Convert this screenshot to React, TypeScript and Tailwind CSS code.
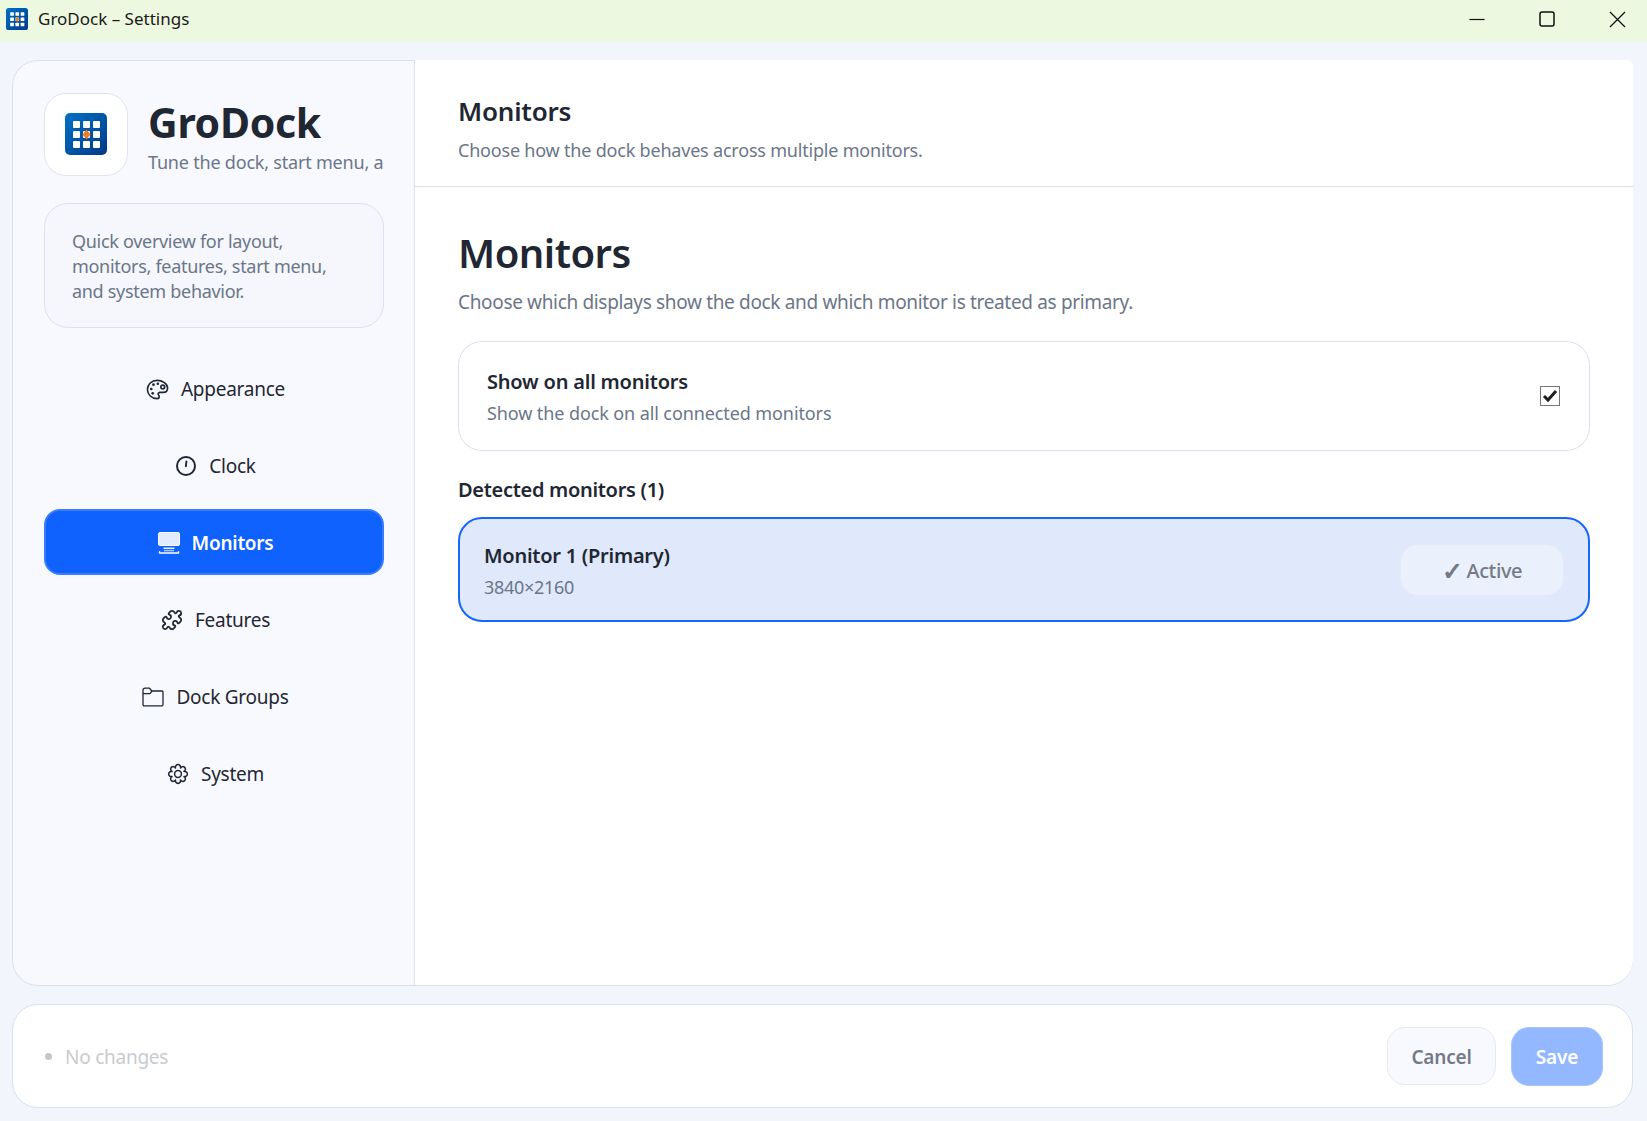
import React from "react";
import {Puzzle} from "lucide-react";

const FONT = "font-['Noto_Sans','Open_Sans',sans-serif]";

const PaletteIcon: React.FC = () => (
    <svg width="23" height="23" viewBox="0 0 24 24" fill="none" stroke="#1f2733" strokeWidth="1.700" strokeLinejoin="round">
        <path d="M11.500 2.500C6 2.500 1.500 6.600 1.500 12s4.500 9.500 10 9.500c1.400 0 2.300-.9 2.300-2 0-.6-.3-1-.6-1.400-.3-.4-.5-.8-.5-1.300 0-1.100.9-1.800 2-1.800h3.300c3 0 4.500-2 4.500-4.600C22.500 6 17.300 2.500 11.500 2.500Z"/>
        <circle cx="17.500" cy="9.500" r="2"/>
        <g fill="#1f2733" stroke="none">
            <circle cx="5.500" cy="11.500" r="1.400"/>
            <circle cx="7.800" cy="7" r="1.400"/>
            <circle cx="12.300" cy="6" r="1.400"/>
            <circle cx="7" cy="16" r="1.400"/>
        </g>
    </svg>
);

const ClockIcon: React.FC = () => (
    <svg width="22" height="22" viewBox="0 0 22 22" fill="none" stroke="#1f2733" strokeLinecap="round">
        <circle cx="11" cy="11" r="9" strokeWidth="2"/>
        <path d="M11.400 6.500L10.900 11.200" strokeWidth="1.900"/>
    </svg>
);

const MonitorIcon: React.FC = () => (
    <svg width="22" height="22" viewBox="0 0 22 22" fill="none">
        <rect x="0.500" y="0.500" width="21" height="13" rx="1.500" fill="#e3ecff" stroke="#ffffff"/>
        <path d="M5.500 16.300H16.500" stroke="#eaf1ff" strokeWidth="1.600"/>
        <path d="M6 18.700H16" stroke="#b9d0ff" strokeWidth="1.200"/>
        <path d="M1.500 19.200V21H20.500V19.200" stroke="#ffffff" strokeWidth="1.500" strokeLinejoin="round"/>
    </svg>
);

const FolderIcon: React.FC = () => (
    <svg width="22" height="20" viewBox="0 0 22 20" fill="none" stroke="#1f2733" strokeWidth="1.300" strokeLinejoin="round">
        <path d="M1 3.200C1 2 1.800 1.200 3 1.200H7.400L10 4H20C20.600 4 21 4.400 21 5V17.600C21 18.300 20.500 18.800 19.800 18.800H2.200C1.500 18.800 1 18.300 1 17.600Z"/>
        <path d="M1 6.600H8L10 4"/>
    </svg>
);

const GearIcon: React.FC = () => (
    <svg width="22" height="22" viewBox="0 0 22 22" fill="none" stroke="#1f2733" strokeWidth="1.500" strokeLinejoin="round">
        <path d="M8.550 5.090A2.600 2.600 0 1 1 13.450 5.090A2.600 2.600 0 1 1 16.910 8.550A2.600 2.600 0 1 1 16.910 13.450A2.600 2.600 0 1 1 13.450 16.910A2.600 2.600 0 1 1 8.550 16.910A2.600 2.600 0 1 1 5.090 13.450A2.600 2.600 0 1 1 5.090 8.550A2.600 2.600 0 1 1 8.550 5.090Z"/>
        <circle cx="11" cy="11" r="3.400"/>
    </svg>
);

// app logo, also used small in the title bar
const Logo: React.FC<{size: number}> = ({size}) => (
    <svg width={size} height={size} viewBox="0 0 42 42">
        <defs>
            <linearGradient id={`logo${size}`} x1="0" y1="0" x2="1" y2="1">
                <stop offset="0" stopColor="#0071c9"/>
                <stop offset="1" stopColor="#003a85"/>
            </linearGradient>
        </defs>
        <rect width="42" height="42" rx="5" fill={`url(#logo${size})`}/>
        {[8, 18, 28].map((y) =>
            [8, 18, 28].map((x) => (
                <rect key={`${x}-${y}`} x={x} y={y} width="7" height="7" rx="1" fill="#fff"/>
            ))
        )}
        <path d="M21.500 16.500L25.500 21.500L21.500 26.500L17.500 21.500Z" fill="#f47a1f"/>
    </svg>
);

const NavItem: React.FC<{icon: React.ReactNode; label: string; active?: boolean}> = ({icon, label, active}) => (
    <div
        className={
            active
                ? "h-[66px] -mt-[2px] rounded-2xl flex items-center justify-center gap-3 pl-[3px] pt-0.5 border-2 border-[#3b7cff] bg-[#0f62fe] text-white font-semibold"
                : "h-16 rounded-2xl flex items-center justify-center gap-3 pl-[3px] border-2 border-transparent text-[#1f2733]"
        }
    >
        {icon}
        <span>{label}</span>
    </div>
);

const App: React.FC = () => {
    return (
        <div className={`${FONT} w-[1647px] h-[1121px] flex flex-col bg-[#f2f5fb] overflow-hidden`}>
            <div className="h-[42px] shrink-0 bg-[#ecf8e0] flex items-center pl-1.5 pb-1">
                <Logo size={22}/>
                <span className="ml-2.5 text-[17px] text-[#1a1a1a]">GroDock – Settings</span>
                <div className="ml-auto flex items-center pr-[21px]">
                    <svg width="16" height="16" viewBox="0 0 16 16" stroke="#111" fill="none" strokeWidth="1.200">
                        <path d="M0.500 8.500H15.500"/>
                    </svg>
                    <svg className="ml-[54px]" width="16" height="16" viewBox="0 0 16 16" stroke="#111" fill="none" strokeWidth="1.500">
                        <rect x="1" y="1" width="14" height="14" rx="2"/>
                    </svg>
                    <svg className="ml-[54px]" width="17" height="17" viewBox="0 0 17 17" stroke="#111" fill="none" strokeWidth="1.300">
                        <path d="M1 1L16 16M16 1L1 16"/>
                    </svg>
                </div>
            </div>

            <div className="flex-1 min-h-0 flex flex-col pl-3 pr-3.5 pt-[18px] pb-[13px] gap-[18px]">
                <div className="flex-1 min-h-0 flex border border-[#d9e0ee] rounded-[26px]">
                    <aside className="w-[402px] shrink-0 bg-[#f8f9fe] rounded-l-[26px] border-r border-[#d9e0ee] pl-[31px] pr-[30px] pt-[31px]">
                        <div className="flex items-center gap-5 h-[84px]">
                            <div className="w-[84px] h-[83px] shrink-0 bg-white border border-[#dfe4f1] rounded-[22px] flex items-center justify-center">
                                <Logo size={42}/>
                            </div>
                            <div className="min-w-0 overflow-hidden pt-[2px]">
                                <div className="text-[41px] leading-[50px] font-bold tracking-[-0.3px] text-[#1f2733]">GroDock</div>
                                <div className="mt-[3px] text-[18px] leading-6 tracking-[-0.2px] text-[#6b7688] whitespace-nowrap">Tune the dock, start menu, and system</div>
                            </div>
                        </div>
                        <div className="mt-[27px] h-[125px] rounded-[24px] border border-[#dce2ef] bg-[#f5f7fc] pl-[27px] pt-0.5 flex items-center text-[18px] leading-[25px] tracking-[-0.3px] text-[#6b7688]">
                            <p>Quick overview for layout,<br/>monitors, features, start menu,<br/>and system behavior.</p>
                        </div>
                        <nav className="mt-[29px] flex flex-col gap-[13px] text-[19px] tracking-[-0.25px]">
                            <NavItem label="Appearance" icon={<PaletteIcon/>}/>
                            <NavItem label="Clock" icon={<ClockIcon/>}/>
                            <NavItem active label="Monitors" icon={<MonitorIcon/>}/>
                            <NavItem label="Features" icon={<Puzzle size={22} strokeWidth={1.9} color="#1f2733"/>}/>
                            <NavItem label="Dock Groups" icon={<FolderIcon/>}/>
                            <NavItem label="System" icon={<GearIcon/>}/>
                        </nav>
                    </aside>

                    <main className="flex-1 min-w-0 bg-white rounded-br-[26px] rounded-tr-md -mr-px -mt-px">
                        <div className="h-[127px] border-b border-[#d9e0ee] pl-[43px] pt-[33px]">
                            <h2 className="text-[26px] leading-9 font-semibold tracking-[-0.2px] text-[#1f2733]">Monitors</h2>
                            <p className="mt-2 text-[18px] leading-[26px] tracking-[-0.2px] text-[#6b7688]">Choose how the dock behaves across multiple monitors.</p>
                        </div>
                        <div className="pl-[43px] pr-[43px] pt-[38px]">
                            <h1 className="text-[40px] leading-[56px] font-semibold tracking-[-0.5px] text-[#1f2733]">Monitors</h1>
                            <p className="mt-[7px] text-[19px] leading-[28px] tracking-[-0.34px] text-[#6b7688]">Choose which displays show the dock and which monitor is treated as primary.</p>
                            <div className="mt-[25px] h-[110px] rounded-[24px] border border-[#d9e0ee] flex items-center justify-between pl-7 pr-[29px]">
                                <div className="pt-0.5">
                                    <div className="text-[20px] leading-7 font-semibold tracking-[-0.2px] text-[#1f2733]">Show on all monitors</div>
                                    <div className="mt-1 text-[18px] leading-[26px] tracking-[-0.1px] text-[#6b7688]">Show the dock on all connected monitors</div>
                                </div>
                                <div className="w-5 h-5 border-[1.5px] border-[#767676] bg-white flex items-center justify-center">
                                    <svg width="16" height="14" viewBox="0 0 16 14" fill="none" stroke="#1f1f1f" strokeWidth="3">
                                        <path d="M2 7L6 11L14 2"/>
                                    </svg>
                                </div>
                            </div>
                            <div className="mt-[25px] text-[20px] leading-7 font-semibold tracking-[-0.3px] text-[#1f2733]">Detected monitors (1)</div>
                            <div className="mt-[13px] h-[105px] rounded-[24px] border-2 border-[#1467fd] bg-[#dfe9fb] flex items-center justify-between px-6">
                                <div className="pt-[3px]">
                                    <div className="text-[20px] leading-7 font-semibold tracking-[-0.25px] text-[#1f2733]">Monitor 1 (Primary)</div>
                                    <div className="mt-1 text-[18px] leading-[26px] tracking-[-0.3px] text-[#6b7688]">3840×2160</div>
                                </div>
                                <div className="w-[164px] h-[52px] rounded-[18px] border border-[#e4ebf8] bg-[#ebf1fc] flex items-center justify-center gap-1 pt-0.5 text-[20px] font-medium tracking-[-0.4px] text-[#747b87]">
                                    <span className="text-[25px] leading-none font-semibold">✓</span>
                                    <span>Active</span>
                                </div>
                            </div>
                        </div>
                    </main>
                </div>

                <footer className="h-[104px] shrink-0 rounded-[26px] border border-[#d9e0ee] bg-white flex items-center pl-[32px] pr-[29px]">
                    <span className="w-[7px] h-[7px] rounded-full bg-[#c4c6ca]"/>
                    <span className="ml-[13px] pt-0.5 text-[19px] tracking-[-0.25px] text-[#c9cbd0]">No changes</span>
                    <button className="ml-auto w-[109px] h-[58px] pt-0.5 rounded-[18px] border border-[#e4e9f4] bg-[#f8f9fe] text-[19px] font-semibold tracking-[-0.2px] text-[#747b87]">Cancel</button>
                    <button className="ml-[15px] w-[92px] h-[59px] pt-0.5 rounded-[18px] border border-[#a8c5ff] bg-[#94b8ff] text-[19px] font-semibold tracking-[-0.2px] text-white">Save</button>
                </footer>
            </div>
        </div>
    );
};

export default App;
